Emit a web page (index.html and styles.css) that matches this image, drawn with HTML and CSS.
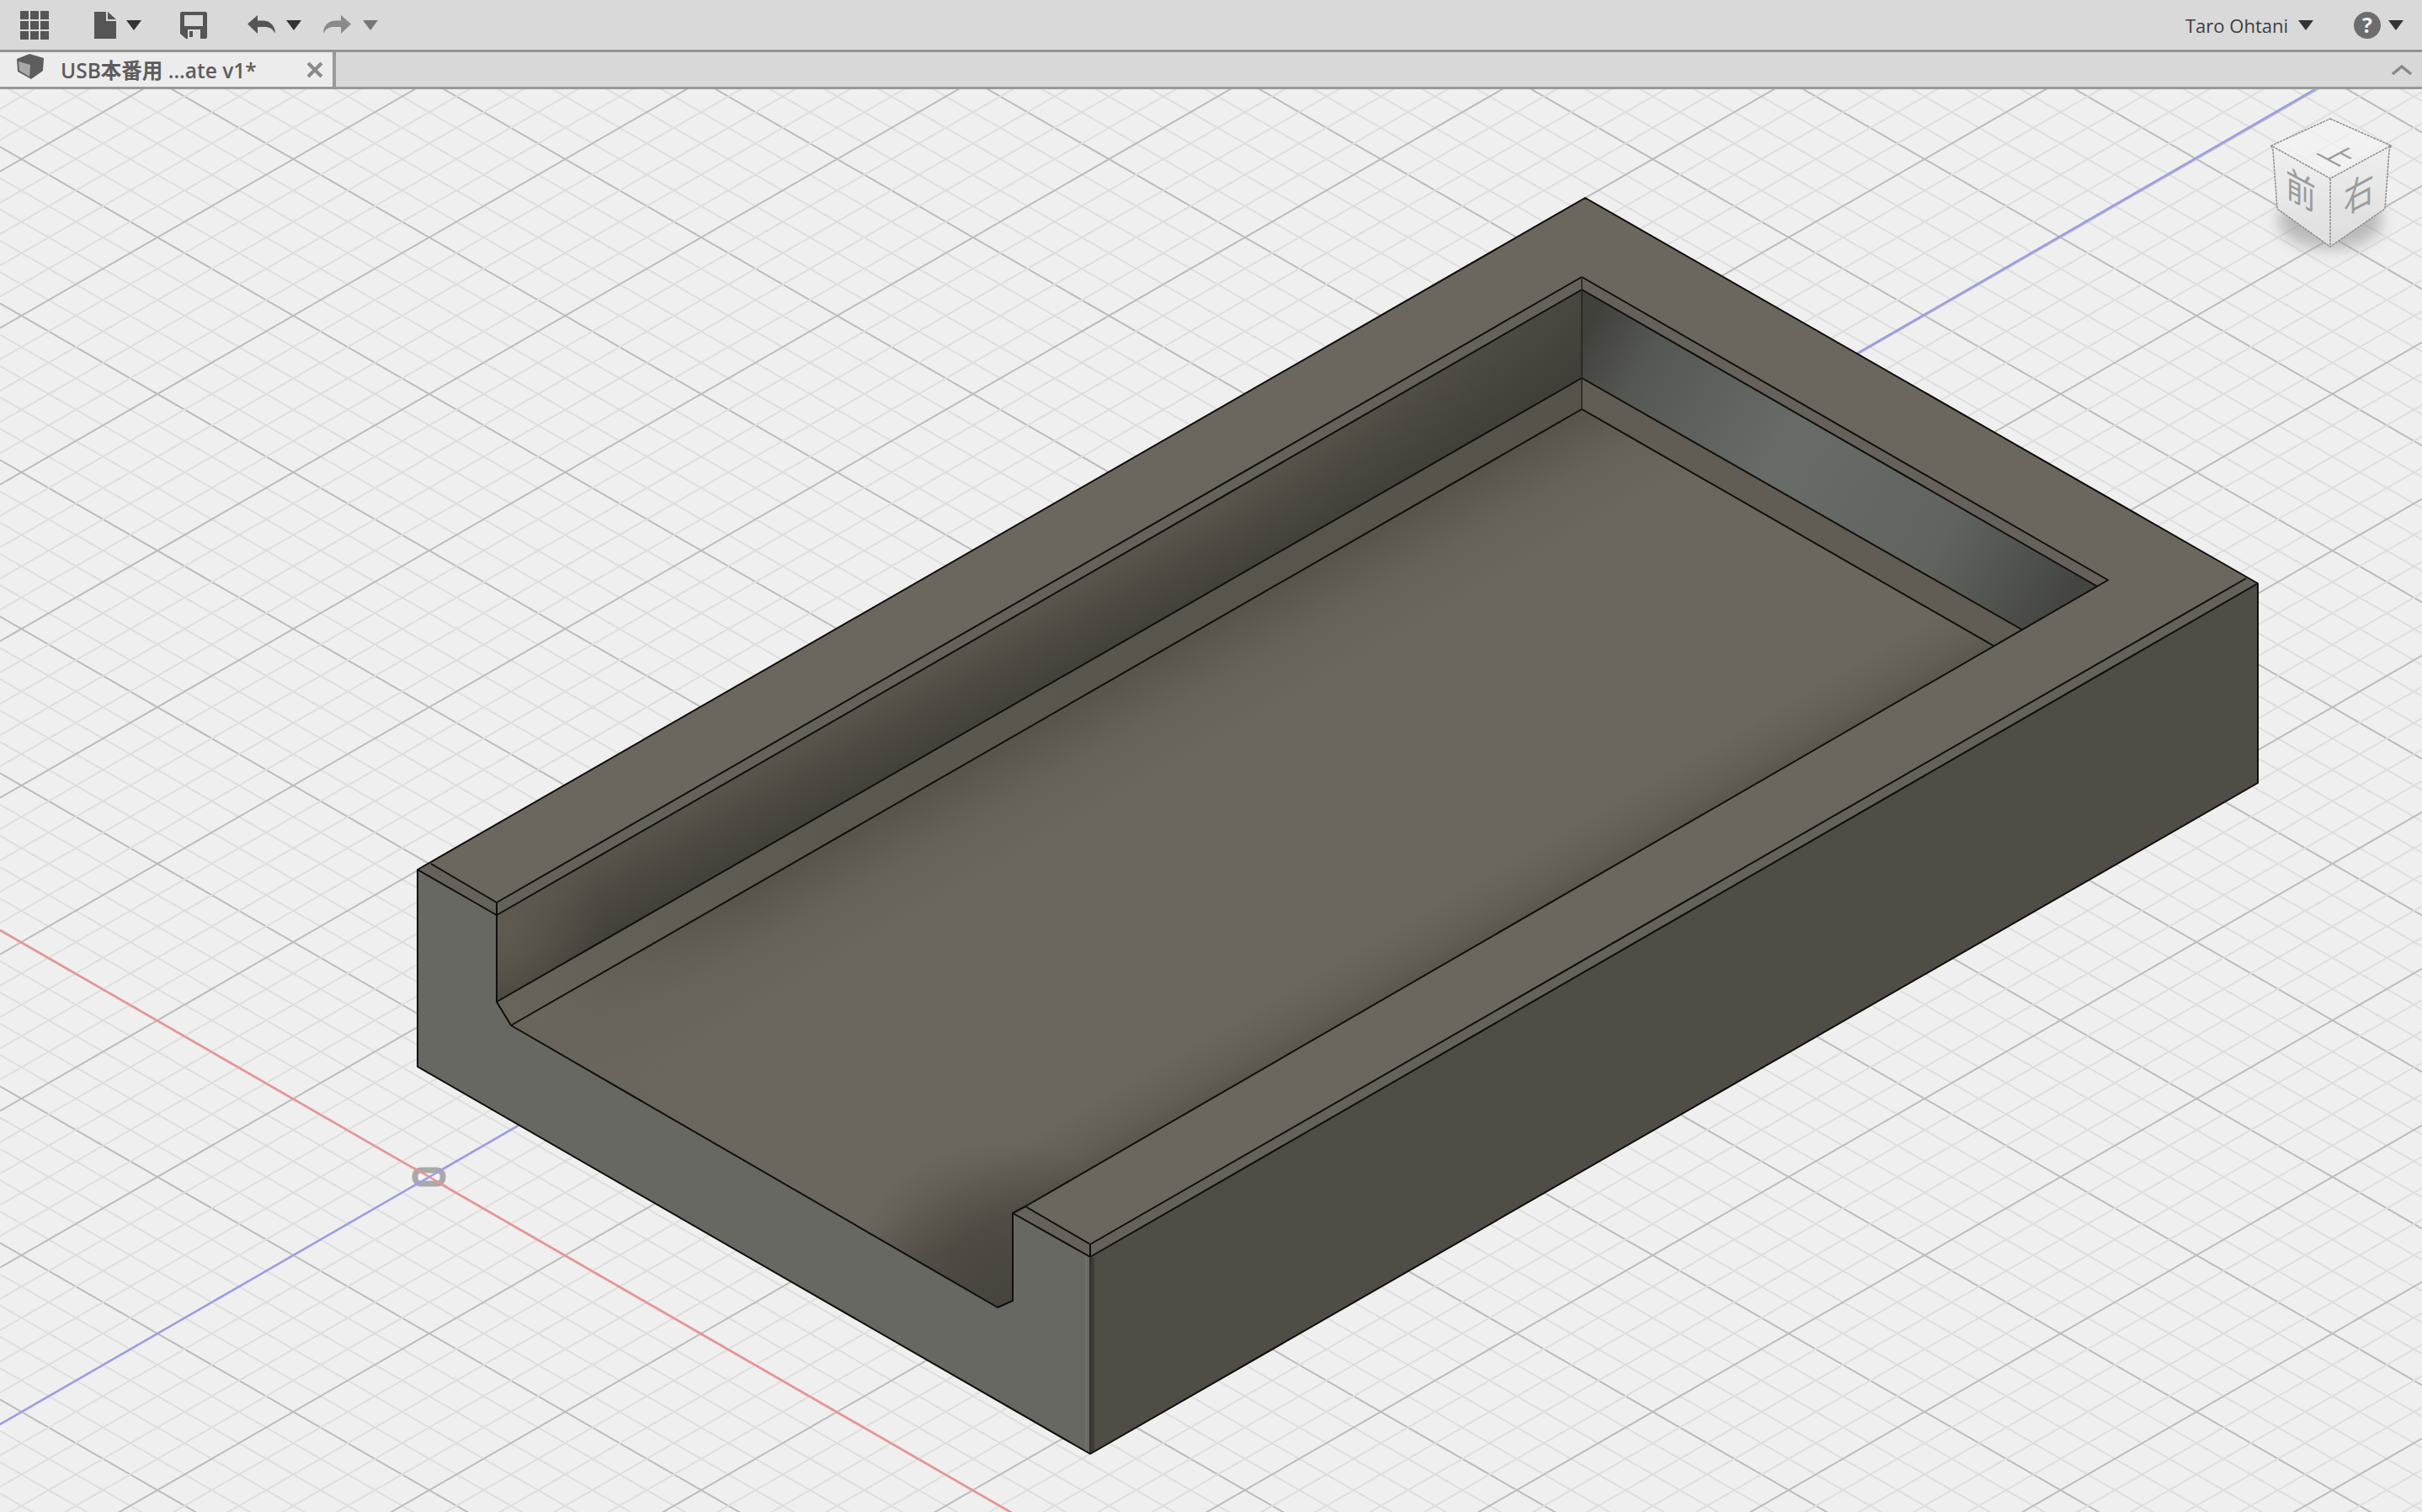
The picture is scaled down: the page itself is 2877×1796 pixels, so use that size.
FILE: index.html
```html
<!DOCTYPE html>
<html lang="ja">
<head>
<meta charset="utf-8">
<title>USB本番用 ...ate v1*</title>
<link rel="stylesheet" href="styles.css">
</head>
<body>
<div class="app">
  <header class="toolbar">
    <svg class="icon grid-icon" viewBox="0 0 34 34" width="34" height="34"><path class="i-dark" d="M0 0h10v10H0zM12 0h10v10H12zM24 0h10v10H24zM0 12h10v10H0zM12 12h10v10H12zM24 12h10v10H24zM0 24h10v10H0zM12 24h10v10H12zM24 24h10v10H24z"/></svg>
    <svg class="icon file-icon" viewBox="0 0 26 32" width="26" height="32"><path class="i-dark" d="M0 0h14v11h12v21H0zM16 0l10 9H16z"/></svg>
    <span class="caret caret-file"></span>
    <svg class="icon save-icon" viewBox="0 0 32 32" width="32" height="32"><path class="i-dark" fill-rule="evenodd" d="M2 0h28a2 2 0 0 1 2 2v28a2 2 0 0 1-2 2H7l-7-6V2a2 2 0 0 1 2-2zM5 4v13h22V4zM9 21v11h15V21z"/><path class="i-dark" d="M11 23h4v7h-4z"/></svg>
    <svg class="icon undo-icon" viewBox="0 0 33 22" width="33" height="22"><path class="i-dark" d="M0 10.500 12 0v6.500h6c9 0 15 6 15 15.500-3-6-7-8-13-8h-8v8z"/></svg>
    <span class="caret caret-undo"></span>
    <svg class="icon redo-icon" viewBox="0 0 33 22" width="33" height="22"><path class="i-mid" d="M33 10.500 21 0v6.500h-6C6 6.500 0 12.500 0 22c3-6 7-8 13-8h8v8z"/></svg>
    <span class="caret caret-redo"></span>
    <span class="user">Taro Ohtani</span>
    <span class="caret caret-user"></span>
    <span class="help">?</span>
    <span class="caret caret-help"></span>
  </header>
  <nav class="tabbar">
    <div class="tab">
      <svg class="tab-cube" viewBox="0 0 34 30" width="34" height="30"><path fill="#5e5e5e" d="M1 6 16 0l17 5-1 15-14 10L2 21z"/><path fill="#a9a9a9" d="M3 9l14 4-1 14-12-7z"/></svg>
      <span class="tab-title">USB本番用 ...ate v1*</span>
      <svg class="tab-close" viewBox="0 0 20 20" width="20" height="20"><path class="x-mark" d="M2 2l16 16M18 2 2 18"/></svg>
    </div>
    <div class="tab-rest">
      <svg class="chevron" viewBox="0 0 26 14" width="26" height="14"><path class="chev-mark" d="M2 12 13 3l11 9"/></svg>
    </div>
  </nav>
  <main class="viewport">
    <svg class="scene" viewBox="0 106 2877 1690" width="2877" height="1690">
      <defs>
        <g id="gridTile">
          <path class="grid-minor" d="M0 37.200l2877 1657M0 74.400l2877 1657M0 111.600l2877 1657M0 148.800l2877 1657"/>
          <path class="grid-major" d="M0 0l2877 1657"/>
        </g>
        <g id="gridSet">
          <use href="#gridTile" y="-1685.700"/><use href="#gridTile" y="-1499.700"/><use href="#gridTile" y="-1313.700"/><use href="#gridTile" y="-1127.700"/>
          <use href="#gridTile" y="-941.700"/><use href="#gridTile" y="-755.700"/><use href="#gridTile" y="-569.700"/><use href="#gridTile" y="-383.700"/>
          <use href="#gridTile" y="-197.700"/><use href="#gridTile" y="-11.700"/><use href="#gridTile" y="174.300"/><use href="#gridTile" y="360.300"/>
          <use href="#gridTile" y="546.300"/><use href="#gridTile" y="732.300"/><use href="#gridTile" y="918.300"/><use href="#gridTile" y="1104.300"/>
          <use href="#gridTile" y="1290.300"/><use href="#gridTile" y="1476.300"/><use href="#gridTile" y="1662.300"/>
        </g>
        <linearGradient id="wallL" gradientUnits="userSpaceOnUse" x1="1235" y1="715" x2="1280" y2="794">
          <stop offset="0" stop-color="#5a564d"/><stop offset=".5" stop-color="#4e4a43"/><stop offset="1" stop-color="#44403a"/>
        </linearGradient>
        <linearGradient id="wallLFar" gradientUnits="userSpaceOnUse" x1="1450" y1="400" x2="1879" y2="400">
          <stop offset="0" stop-color="#3f3c37" stop-opacity="0"/><stop offset="1" stop-color="#3f3c37" stop-opacity=".6"/>
        </linearGradient>
        <radialGradient id="wallLNear" gradientUnits="userSpaceOnUse" cx="590" cy="1110" r="130">
          <stop offset="0" stop-color="#625d53" stop-opacity=".85"/><stop offset="1" stop-color="#625d53" stop-opacity="0"/>
        </radialGradient>
        <linearGradient id="wallR" gradientUnits="userSpaceOnUse" x1="1879" y1="400" x2="2450" y2="725">
          <stop offset="0" stop-color="#41413c"/><stop offset=".12" stop-color="#555753"/><stop offset=".42" stop-color="#686c68"/><stop offset=".75" stop-color="#60635e"/><stop offset="1" stop-color="#444541"/>
        </linearGradient>
        <linearGradient id="ledgeL" gradientUnits="userSpaceOnUse" x1="600" y1="1200" x2="1879" y2="460">
          <stop offset="0" stop-color="#69645a"/><stop offset=".3" stop-color="#5c584f"/><stop offset="1" stop-color="#57534a"/>
        </linearGradient>
        <linearGradient id="floorG" gradientUnits="userSpaceOnUse" x1="1243" y1="852" x2="1488" y2="1277">
          <stop offset="0" stop-color="#58544b"/><stop offset=".13" stop-color="#66625a"/><stop offset=".26" stop-color="#6b675d"/><stop offset=".86" stop-color="#6b675e"/><stop offset=".95" stop-color="#635f56"/><stop offset="1" stop-color="#5b574e"/>
        </linearGradient>
        <radialGradient id="notchShade" gradientUnits="userSpaceOnUse" cx="1190" cy="1545" r="190">
          <stop offset="0" stop-color="#47433d"/><stop offset=".35" stop-color="#47433d" stop-opacity=".7"/><stop offset="1" stop-color="#47433d" stop-opacity="0"/>
        </radialGradient>
        <radialGradient id="floorNear" gradientUnits="userSpaceOnUse" cx="640" cy="1210" r="280">
          <stop offset="0" stop-color="#6b665b"/><stop offset="1" stop-color="#6b665b" stop-opacity="0"/>
        </radialGradient>
        <linearGradient id="cubeTop" x1="0" y1="0" x2="0" y2="1">
          <stop offset="0" stop-color="#f4f4f4" stop-opacity=".55"/><stop offset="1" stop-color="#f1f1f1" stop-opacity=".85"/>
        </linearGradient>
        <linearGradient id="cubeL" x1="0" y1="0" x2="0" y2="1">
          <stop offset="0" stop-color="#eeeeee" stop-opacity=".95"/><stop offset="1" stop-color="#e2e2e2" stop-opacity=".95"/>
        </linearGradient>
        <linearGradient id="cubeR" x1="0" y1="0" x2="0" y2="1">
          <stop offset="0" stop-color="#ededed" stop-opacity=".95"/><stop offset="1" stop-color="#dfdfdf" stop-opacity=".95"/>
        </linearGradient>
        <filter id="blur" x="-40%" y="-40%" width="180%" height="180%"><feGaussianBlur stdDeviation="9"/></filter>
      </defs>

      <rect class="ground" x="0" y="106" width="2877" height="1690"/>
      <use href="#gridSet"/>
      <use href="#gridSet" transform="matrix(1 0 0 -1 0 1866)"/>

      <path class="axis-red" d="M0 1105 1200 1796"/>
      <path class="axis-blue" d="M0 1692 2750 106"/>
      <rect class="origin" x="493" y="1390" width="33" height="16" rx="7"/>
      <path class="axis-red" d="M490 1386.500 530 1409.500"/>
      <path class="axis-blue" d="M490 1409.500 530 1386.500"/>

      <!-- model -->
      <path class="f-top" d="M496 1033 1883 235l799 458-1387 800-92-52 15-8L2504 689 1879 329 590 1072v15z"/>
      <path class="f-bevel" d="M496 1033l16-7 78 46v15zM1203 1441l15-8 77 45v15zM1295 1478 2668 687l14 6-1387 800zM1879 329 2504 689l-12 8-613-353zM590 1072 1879 329v15L590 1087z"/>
      <path fill="url(#wallL)" d="M590 1087 1879 344v105L590 1190z"/>
      <path fill="url(#wallLFar)" d="M590 1087 1879 344v105L590 1190z"/>
      <path fill="url(#wallLNear)" d="M590 1087 1879 344v105L590 1190z"/>
      <path fill="url(#wallR)" d="M1879 344l613 353-90 51-523-299z"/>
      <path fill="url(#ledgeL)" d="M590 1190 1879 449v37L607 1218z"/>
      <path class="f-ledge-r" d="M1879 449l523 299-34 19-489-281z"/>
      <path fill="url(#floorG)" d="M607 1218 1879 486l489 281-1150 666-15 8v104l-18 8z"/>
      <path fill="url(#floorNear)" d="M607 1218 1879 486l489 281-1150 666-15 8v104l-18 8z"/>
      <path fill="url(#notchShade)" d="M607 1218 1879 486l489 281-1150 666-15 8v104l-18 8z"/>
      <path class="f-front" d="M496 1033l94 54v103l17 28 578 335 18-8v-104l92 52v234L496 1267z"/>
      <path class="f-right" d="M1295 1493 2682 693v237L1295 1727z"/>
      <path class="hi" d="M1290 1491v233"/>
      <path class="band" d="M1298 1494v231"/>

      <path class="edge" d="M496 1267 1295 1727 2682 930V693L1883 235 496 1033zM496 1033l94 54M512 1026l78 46M590 1072v118l17 28M590 1190 1879 449M607 1218 1879 486M590 1072 1879 329M590 1087 1879 344M1879 329 2504 689 1218 1433M1879 344 2492 697M1879 449 2402 748M1879 486 2368 767M607 1218 1185 1553 1203 1545V1441L1295 1493M1203 1441l15-8 77 45v15M1295 1478 2668 687M1295 1493 2682 693"/>
      <path class="edge-soft" d="M1879 329V486M1295 1493v234"/>

      <!-- view cube -->
      <ellipse class="cube-shadow" cx="2768" cy="262" rx="62" ry="34"/>
      <path fill="url(#cubeL)" d="M2698 173l70 39v81l-63-45z"/>
      <path fill="url(#cubeR)" d="M2840 173l-72 39v81l65-45z"/>
      <path fill="url(#cubeTop)" d="M2768 141l72 32-72 39-70-39z"/>
      <path class="cube-line" d="M2768 141l72 32-72 39-70-39zM2698 173l2 6 5 69 63 45 65-45 5-69 2-6M2768 212v81"/>
      <text class="cube-txt" transform="matrix(.86 .46 -.86 .46 2766 190)" text-anchor="middle" font-size="36">上</text>
      <text class="cube-txt" transform="matrix(.82 .44 0 1 2733 242)" text-anchor="middle" font-size="44">前</text>
      <text class="cube-txt" transform="matrix(.82 -.44 0 1 2802 246)" text-anchor="middle" font-size="44">右</text>
    </svg>
  </main>
</div>
</body>
</html>
```

FILE: styles.css
```css
* { box-sizing: border-box; }
html, body { margin: 0; padding: 0; height: 100%; overflow: hidden; }
body { font-family: "Open Sans", "Noto Sans CJK JP", sans-serif; background: #efefef; }
.app { display: flex; flex-direction: column; height: 1796px; width: 2877px; }

.toolbar {
  height: 62px; flex: none; display: flex; align-items: center;
  background: #d9d9d9; border-bottom: 3px solid #939393;
  padding: 0 22px 0 24px;
}
.icon { display: block; flex: none; }
.i-dark { fill: #555555; }
.i-mid { fill: #8a8a8a; }
.file-icon { margin-left: 54px; }
.save-icon { margin-left: 46px; }
.undo-icon { margin-left: 48px; margin-top: -2px; }
.redo-icon { margin-left: 26px; margin-top: -2px; }
.caret {
  flex: none; width: 0; height: 0; display: block;
  border-left: 9px solid transparent; border-right: 9px solid transparent;
  border-top: 12px solid #333333;
}
.caret-file { margin-left: 12px; }
.caret-undo { margin-left: 13px; }
.caret-redo { margin-left: 14px; border-top-color: #777777; }
.user { margin-left: auto; font-size: 22px; color: #3d3d3d; white-space: nowrap; }
.caret-user { margin-left: 12px; }
.help {
  flex: none; width: 32px; height: 32px; margin-left: 48px; border-radius: 50%;
  background: #6d6d6d; color: #f2f2f2; font-size: 25px; font-weight: 700;
  display: flex; align-items: center; justify-content: center; line-height: 1;
}
.caret-help { margin-left: 9px; }

.tabbar {
  height: 44px; flex: none; display: flex;
  border-bottom: 3px solid #989898; background: #d8d8d8;
}
.tab {
  width: 399px; flex: none; display: flex; align-items: center;
  background: #ececec; border-right: 4px solid #999999; padding-left: 19px;
}
.tab-cube { flex: none; margin-top: -8px; }
.tab-title {
  margin-left: 19px; font-size: 24.500px; font-weight: 600; color: #5c5c5c;
  font-family: "Open Sans", "Noto Sans CJK JP", sans-serif; white-space: nowrap;
}
.tab-close { margin-left: auto; margin-right: 11px; flex: none; }
.x-mark { fill: none; stroke: #8a8a8a; stroke-width: 4; }
.tab-rest { flex: 1; display: flex; align-items: center; justify-content: flex-end; padding-right: 11px; }
.chev-mark { fill: none; stroke: #888888; stroke-width: 3.500; }
.chevron { display: block; }

.viewport { flex: 1; position: relative; overflow: hidden; }
.scene { display: block; }
.ground { fill: #efefef; }
.grid-minor { fill: none; stroke: #dedede; stroke-width: 2; }
.grid-major { fill: none; stroke: #bcbcbc; stroke-width: 2; }
.axis-red { fill: none; stroke: #ea9393; stroke-width: 2.500; }
.axis-blue { fill: none; stroke: #9c9ce6; stroke-width: 2.500; }
.origin { fill: #f4f4f4; stroke: #a9a9a9; stroke-width: 7; }

.f-top { fill: #6c675e; }
.f-bevel { fill: #66615a; }
.f-ledge-r { fill: #625d54; }
.f-front { fill: #686862; }
.f-right { fill: #504c46; }
.hi { fill: none; stroke: #72726c; stroke-width: 2; }
.band { fill: none; stroke: #3f3c37; stroke-width: 4; }
.edge { fill: none; stroke: #0f0f0d; stroke-width: 2; stroke-linejoin: round; }
.edge-soft { fill: none; stroke: #232320; stroke-width: 1.500; }

.cube-shadow { fill: #8d8d8d; opacity: .55; filter: url(#blur); }
.cube-line { fill: none; stroke: #8e8e8e; stroke-width: 1.500; stroke-dasharray: 3 1; }
.cube-txt { fill: #9b9b9b; font-family: "Noto Sans CJK JP", sans-serif; }
```
